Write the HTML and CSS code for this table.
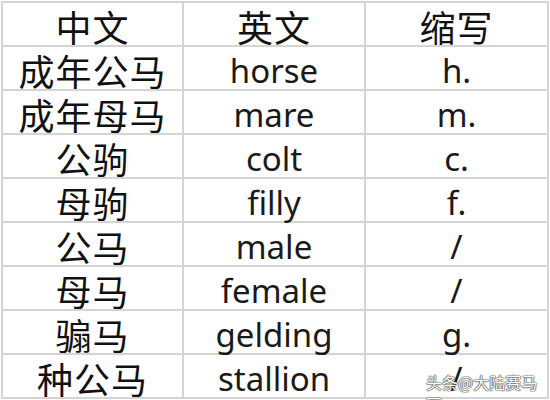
FILE: index.html
```html
<!DOCTYPE html>
<html lang="zh">
<head>
<meta charset="utf-8">
<link rel="stylesheet" href="styles.css">
</head>
<body>
<div class="page">
  <div class="grid">
    <div class="cell zh">中文</div><div class="cell zh">英文</div><div class="cell zh">缩写</div>
    <div class="cell zh">成年公马</div><div class="cell en">horse</div><div class="cell en">h.</div>
    <div class="cell zh">成年母马</div><div class="cell en">mare</div><div class="cell en">m.</div>
    <div class="cell zh">公驹</div><div class="cell en">colt</div><div class="cell en">c.</div>
    <div class="cell zh">母驹</div><div class="cell en">filly</div><div class="cell en">f.</div>
    <div class="cell zh">公马</div><div class="cell en">male</div><div class="cell en">/</div>
    <div class="cell zh">母马</div><div class="cell en">female</div><div class="cell en">/</div>
    <div class="cell zh">骟马</div><div class="cell en">gelding</div><div class="cell en">g.</div>
    <div class="cell zh">种公马</div><div class="cell en">stallion</div><div class="cell en">/</div>
  </div>
  <div class="watermark">头条@大陆赛马网</div>
</div>
</body>
</html>
```
FILE: styles.css
```css
html, body {
  margin: 0;
  padding: 0;
  background: #ffffff;
}
.page {
  position: relative;
  width: 550px;
  height: 400px;
  overflow: hidden;
}
.grid {
  display: grid;
  grid-template-columns: 179px 180px 181px;
  grid-auto-rows: 42px;
  gap: 2px;
  padding: 2px;
  margin: 1px 0 0 1px;
  width: max-content;
  background: #d4d4d4;
}
.cell {
  background: #ffffff;
  color: #111111;
  display: flex;
  align-items: center;
  justify-content: center;
  white-space: nowrap;
  padding-top: 5px;
  line-height: 37px;
  height: 37px;
}
.zh {
  font-family: "Noto Sans CJK SC", sans-serif;
  font-size: 36px;
  letter-spacing: 1px;
}
.en {
  font-family: "Noto Sans", "Noto Sans CJK SC", sans-serif;
  font-size: 33px;
  font-weight: 400;
  color: #1a1a1a;
}
.watermark {
  position: absolute;
  left: 426px;
  top: 371px;
  font-family: "Noto Sans CJK SC", sans-serif;
  font-size: 16px;
  line-height: 22px;
  color: #ffffff;
  text-shadow: 0 0 1px #444, 0 0 1px #444, 0 0 1px #444, 0 0 2px #888;
}
```
